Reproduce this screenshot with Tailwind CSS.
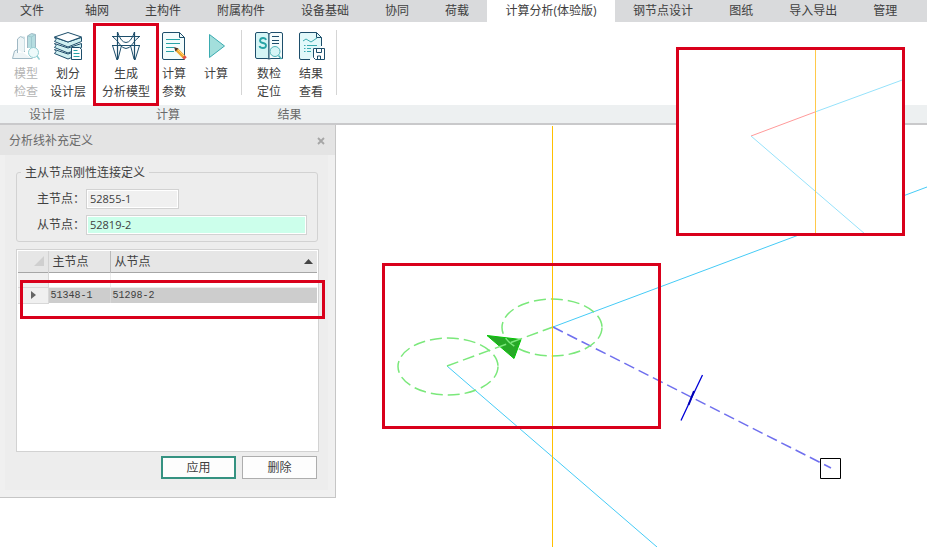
<!DOCTYPE html>
<html lang="zh-CN">
<head>
    <meta charset="UTF-8">
    <meta name="viewport" content="width=device-width, initial-scale=1.0">
    <title>计算分析 - 分析线补充定义</title>
    <script src="https://cdn.jsdelivr.net/npm/@tailwindcss/browser@4"></script>
</head>
<body class="relative flex h-screen flex-col overflow-hidden bg-white font-['Open_Sans','Noto_Sans_CJK_SC',sans-serif] text-xs text-[#404040]">

    <!-- Menu tabs -->
    <nav class="flex h-[22px] shrink-0 items-stretch bg-[#d9dadc] leading-5 whitespace-nowrap">
        <button class="mr-[3px] px-5">文件</button>
        <button class="px-[18px]">轴网</button>
        <button class="px-[18px]">主构件</button>
        <button class="px-[18px]">附属构件</button>
        <button class="px-[18px]">设备基础</button>
        <button class="px-[18px]">协同</button>
        <button class="px-[18px]">荷载</button>
        <button class="w-32 bg-white">计算分析(体验版)</button>
        <button class="px-[18px]">钢节点设计</button>
        <button class="px-[18px]">图纸</button>
        <button class="px-[18px]">导入导出</button>
        <button class="px-[18px]">管理</button>
    </nav>

    <!-- Ribbon -->
    <div class="flex h-[103px] shrink-0 border-b-2 border-[#c9c9cb] leading-[18px] whitespace-nowrap">
        <section class="flex w-[94px] flex-col">
            <div class="flex flex-1 px-[5px] pt-2.5">
                <button class="flex w-[42px] flex-col items-center text-[#b4b4b4]" disabled>
                    <svg class="mb-[5px] size-7" viewBox="0 0 28 28" fill="none" stroke="#9fb8c4">
                        <path d="M5.500 17.500 2.500 19 .5 26.500h20M5.500 21V7l3-2.500 4 2V20" fill="#eef5f7"/>
                        <path d="M8.500 5h4v14" stroke="#c9dde3"/>
                        <path d="M15.500 16V4l4-2.500 4 1V16" fill="#b5dde0"/>
                        <path d="M19.500 4.500V16M15.500 4l4 1 4-2.500" stroke="#9fc9d0"/>
                        <circle cx="21.500" cy="20.500" r="5" fill="#eefafb" stroke="#93cfd3"/>
                        <path d="m25 24 2.500 3.500" stroke="#93cfd3" stroke-width="1.500"/>
                    </svg>
                    <span>模型</span><span>检查</span>
                </button>
                <button class="flex w-[42px] flex-col items-center">
                    <svg class="mb-[5px] size-7" viewBox="0 0 28 28" fill="none" stroke="#1d4e6b" stroke-linejoin="round">
                        <path d="m.5 17.500 1.500 2-1.500 2L14 27l13.500-5.500V17L14 22z" fill="#cfeff0"/>
                        <path d="m.5 11.500 1.500 2-1.500 2L14 21l13.500-5.500v-4L14 16z" fill="#cfeff0"/>
                        <path d="m.5 5.500 1.500 2-1.500 2L14 15l13.500-5.500v-4L14 10z" fill="#cfeff0"/>
                        <path d="M.5 5 14 .5 27.500 5 14 10z" fill="#fff"/>
                        <path d="M17.500 15.500h8l2 2v10h-10z" fill="#fff"/>
                        <path d="M19.500 18.500h4M19.500 21.500h6M19.500 24.500h6" stroke="#27a3a6"/>
                    </svg>
                    <span>划分</span><span>设计层</span>
                </button>
            </div>
            <div class="h-[18px] bg-[#edf0f1] text-center leading-5 text-[#6a6a6a]">设计层</div>
        </section>

        <section class="flex w-[148px] flex-col">
            <div class="flex flex-1 pt-2.5">
                <button class="ml-1.5 mr-px flex w-[52px] flex-col items-center">
                    <svg class="mb-[5px] size-7" viewBox="0 0 28 28" fill="none" stroke="#1d4e6b">
                        <path d="M5.500 0v28M22.500 0v28" stroke-width="1.200"/>
                        <path d="M0 4.500h28M0 13.500h28"/>
                        <path d="M5.500 0Q9 10.500 14 10.500T22.500 0M.5 4.500Q5 8 7.500 12 10.500 16.500 14 16.500T20.500 12Q23 8 27.500 4.500"/>
                        <path d="M.5 13.500 5 28M27.500 13.500 23 28M6 27 9.500 13.500M22 27 18.500 13.500"/>
                    </svg>
                    <span>生成</span><span>分析模型</span>
                </button>
                <button class="flex w-[42px] flex-col items-center">
                    <svg class="mb-[5px] size-7" viewBox="0 0 28 28" fill="none" stroke="#1d4e6b">
                        <path d="M4 .5h15.500l5 5v22H4A1.500 1.500 0 0 1 2.500 26V2A1.500 1.500 0 0 1 4 .5z" fill="#f3fcfc"/>
                        <path d="M19.500.5v5h5"/>
                        <path d="M6 7.500h14M6 11.500h14M6 15.500h8M6 19.500h8" stroke="#27a3a6"/>
                        <path d="m16.500 17.500 7.500 7.500" stroke="#f2a72e" stroke-width="3.500"/>
                        <path d="m17 17 7.500 7.500" stroke="#ffd478"/>
                        <path d="m14 15 1.500 4.500 3-3z" fill="#4a3428" stroke="none"/>
                        <path d="m23.500 24.500 2 2" stroke="#df5349" stroke-width="3.500"/>
                    </svg>
                    <span>计算</span><span>参数</span>
                </button>
                <button class="flex w-[42px] flex-col items-center">
                    <svg class="mb-[5px] size-7" viewBox="0 0 28 28">
                        <path d="M7.500 2.500v23L22.500 14z" fill="#a3dfdc" stroke="#3aabb0"/>
                    </svg>
                    <span>计算</span>
                </button>
                <span class="-mt-0.5 ml-1 h-[65px] w-px bg-[#d5d5d5]"></span>
            </div>
            <div class="h-[18px] bg-[#edf0f1] text-center leading-5 text-[#6a6a6a]">计算</div>
        </section>

        <section class="flex w-[95px] flex-col">
            <div class="flex flex-1 pl-1.5 pt-2.5">
                <button class="flex w-[42px] flex-col items-center">
                    <svg class="mb-[5px] size-7" viewBox="0 0 28 28" fill="none" stroke="#1d4e6b">
                        <path d="M2 .5h10l2 1.500V27l-2-.5H2A1.500 1.500 0 0 1 .5 25V2A1.500 1.500 0 0 1 2 .5z" fill="#d5f5f6"/>
                        <path d="M14 2 16 .5h10A1.500 1.500 0 0 1 27.500 2v24.500H16l-2 .5z" fill="#f5fcfc"/>
                        <path d="M11 8Q10.500 6 8 6T5 8.500Q5 10.500 8 11T11 13.500Q11 16 8 16T4.500 14" stroke="#27a3a6" stroke-width="1.800"/>
                        <path d="M17 4.500h7M17 8.500h7M17 11.500h7"/>
                        <circle cx="20" cy="19.500" r="5" fill="#d5f5f6" stroke="#4db4b8"/>
                        <path d="m23.500 23.500 3 3.500" stroke="#4db4b8" stroke-width="1.500"/>
                    </svg>
                    <span>数检</span><span>定位</span>
                </button>
                <button class="flex w-[42px] flex-col items-center">
                    <svg class="mb-[5px] size-7" viewBox="0 0 28 28" fill="none" stroke="#1d4e6b">
                        <path d="M13 27.500H4A1.500 1.500 0 0 1 2.500 26V2A1.500 1.500 0 0 1 4 .5h15.500l5 5V14" fill="#e2f9fa"/>
                        <path d="M19.500.5v5h5"/>
                        <path d="m6 9 3-2 5 3 6-4M7 13.500h1.500M10 13.500h10M7 16.500h1.500M10 16.500h4M7 19.500h1.500M10 19.500h4" stroke="#3aabb0"/>
                        <path d="M16.500 16.500h11v11h-9l-2-2z" fill="#fff"/>
                        <path d="M19.500 16.500v4h5v-4M20.500 27v-3h3v3"/>
                    </svg>
                    <span>结果</span><span>查看</span>
                </button>
                <span class="-mt-0.5 ml-1 h-[65px] w-px bg-[#d5d5d5]"></span>
            </div>
            <div class="h-[18px] bg-[#edf0f1] text-center leading-5 text-[#6a6a6a]">结果</div>
        </section>

        <div class="flex flex-1 flex-col justify-end">
            <div class="h-[18px] bg-[#edf0f1]"></div>
        </div>
    </div>

    <main class="flex min-h-0 flex-1 items-start">
        <!-- Definition panel -->
        <aside class="w-[336px] shrink-0 border-r border-b border-[#c6c6c6] bg-[#f0f0f0] pb-[7px]">
            <header class="flex h-[30px] items-center justify-between bg-[#e4e4e4] pt-px pr-2 pl-[9px] text-[#6a6a6a]">
                <h1>分析线补充定义</h1>
                <button class="flex size-3 items-center justify-center" aria-label="关闭">
                    <svg class="size-2" viewBox="0 0 8 8"><path d="m1 1 6 6M7 1 1 7" stroke="#a6a6a6" stroke-width="1.800"/></svg>
                </button>
            </header>

            <form class="mr-[7px] ml-[5px] bg-[#ededed] pt-2 pr-[9px] pb-[11px] pl-[11px]">
                <fieldset class="mr-px rounded-[3px] border border-[#d2d2d2] px-2.5 pb-1.5">
                    <legend class="-ml-1.5 px-1 pt-px leading-[18px]">主从节点刚性连接定义</legend>
                    <div class="mt-[7px] flex items-center pl-2.5">
                        <label for="master" class="w-[49px]">主节点：</label>
                        <input id="master" value="52855-1" class="h-5 w-[93px] border border-[#d2d2d2] bg-[#f0f0f0] px-[3px] pb-0.5 text-[11px] outline outline-offset-[-2px] outline-white">
                    </div>
                    <div class="mt-1.5 flex items-center pl-2.5">
                        <label for="slave" class="w-[49px] shrink-0">从节点：</label>
                        <input id="slave" value="52819-2" class="h-5 min-w-0 flex-1 border border-[#d2d2d2] bg-[#ccffeb] px-[3px] pb-0.5 text-[11px] outline outline-offset-[-2px] outline-white">
                    </div>
                </fieldset>

                <div class="mt-[7px] h-[203px] border border-[#d2d2d2] bg-white p-px">
                    <table class="w-full table-fixed border-collapse text-left">
                        <colgroup><col class="w-[30px]"><col class="w-[62px]"><col></colgroup>
                        <thead>
                            <tr class="h-[21px] border-b border-[#a6a6a6] bg-[#e6e6e6]">
                                <th class="border-r border-[#d2d2d2] p-0" aria-label="选择">
                                    <svg class="ml-4 size-2.5" viewBox="0 0 10 10"><path d="M10 0v10H0z" fill="#cfcfcf"/></svg>
                                </th>
                                <th class="border-r border-[#bababa] p-0 pt-px pl-1 font-normal">主节点</th>
                                <th class="p-0 pt-px font-normal">
                                    <div class="flex items-center justify-between px-1">
                                        从节点
                                        <svg class="h-[5px] w-[9px]" viewBox="0 0 9 5"><path d="M0 5 4.500 0 9 5z" fill="#444"/></svg>
                                    </div>
                                </th>
                            </tr>
                        </thead>
                        <tbody class="font-['Liberation_Mono',monospace] text-[10px]">
                            <tr class="h-[15px]">
                                <td class="border-r border-b border-[#d8d8d8] bg-[#f0f0f0] p-0"></td>
                                <td class="border-r border-b border-[#ebebeb] p-0"></td>
                                <td class="border-b border-[#ebebeb] p-0"></td>
                            </tr>
                            <tr class="h-4 bg-[#cdcdcd]">
                                <td class="border-r border-b border-[#d8d8d8] bg-[#f0f0f0] p-0">
                                    <svg class="ml-[13px] h-2 w-[5px]" viewBox="0 0 5 8"><path d="M0 0v8l5-4z" fill="#666"/></svg>
                                </td>
                                <td class="border-r border-[#d8d8d8] p-0 pl-0.5">51348-1</td>
                                <td class="p-0 pl-0.5">51298-2</td>
                            </tr>
                        </tbody>
                    </table>
                </div>

                <div class="mt-1 flex justify-end gap-1.5 pr-0.5">
                    <button type="button" class="h-[23px] w-[75px] border-2 border-[#359281] bg-[#fdfdfd]">应用</button>
                    <button type="button" class="h-[23px] w-[75px] border border-[#adadad] bg-[#fdfdfd]">删除</button>
                </div>
            </form>
        </aside>

        <!-- Model view -->
        <svg class="h-full min-w-0 flex-1" fill="none">
            <g transform="translate(-336 -125)">
                <path d="M553 327 927 187" stroke="#45cbf6"/>
                <path d="M447 366 657 547" stroke="#45cbf6"/>
                <path d="m553 327 278 141" stroke="#6f6fee" stroke-width="1.500" stroke-dasharray="11 5"/>
                <path d="m487 335.500 34 4-7 19z" fill="#27a827" stroke="#00c800"/>
                <g stroke="#7be87b" stroke-width="1.500" stroke-dasharray="12 5">
                    <ellipse cx="448" cy="366.500" rx="50" ry="28.500"/>
                    <ellipse cx="552" cy="327.500" rx="50" ry="28.500"/>
                    <path d="m447 366 106-39"/>
                </g>
                <path d="M552.500 126v900" stroke="#ffc000"/>
                <path d="m702.500 375-11 23-10.500 22.500" stroke="#0000d8" stroke-width="1.300"/>
                <path d="m694 391-5.500 14" stroke="#0000b4" stroke-width="2"/>
                <path d="M820.500 458.500h20v20h-20z" stroke="#000"/>
            </g>
        </svg>
    </main>

    <!-- Detail inset -->
    <div class="absolute top-[47px] left-[676px] h-[189px] w-[229px] border-[3px] border-[#d9001b] bg-white">
        <svg class="size-full" viewBox="679 50 223 183" fill="none">
            <path d="m751 136 64-24" stroke="#ff9a9a"/>
            <path d="m815 112 90-33M751 136l114 98" stroke="#96e2fb"/>
            <path d="M815.500 50v183" stroke="#ffc94a"/>
        </svg>
    </div>

    <!-- Highlight frames -->
    <div class="pointer-events-none absolute top-[23px] left-[93px] h-[83px] w-[66px] border-[3px] border-[#d9001b]"></div>
    <div class="pointer-events-none absolute top-[280px] left-5 h-[39px] w-[305px] border-[3px] border-[#d9001b]"></div>
    <div class="pointer-events-none absolute top-[263px] left-[382px] h-[166px] w-[279px] border-[3px] border-[#d9001b]"></div>
</body>
</html>
